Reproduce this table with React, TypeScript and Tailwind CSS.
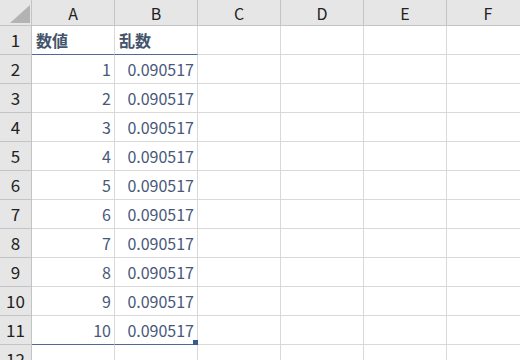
// Excel風のシート表示

const COLS = ["A", "B", "C", "D", "E", "F"];

const FONT = { fontFamily: "'Noto Sans CJK JP', 'Liberation Sans', sans-serif" };

function ColHeader({ label }: { label: string }) {
    return (
        <div className="h-[26px] w-[83px] shrink-0 flex items-center justify-center bg-[#e6e6e6] border-r border-b border-[#c4c4c4] text-[16px] text-[#222]">
            {label}
        </div>
    );
}

function RowHeader({ n }: { n: number }) {
    return (
        <div className="h-[29px] w-[32px] shrink-0 flex items-center justify-center bg-[#e6e6e6] border-r border-b border-[#c4c4c4] text-[17px] text-[#222]">
            {n}
        </div>
    );
}

export default function App() {
    const rows = Array.from({ length: 12 }, (_, i) => i + 1);

    return (
        <div className="w-[520px] h-[360px] overflow-hidden bg-white" style={FONT}>
            <div className="flex">
                {/* 左上の角 */}
                <div className="relative h-[26px] w-[32px] shrink-0 bg-[#e6e6e6] border-r border-b border-[#c4c4c4]">
                    <svg className="absolute left-[10px] top-[5px]" width="20" height="18" viewBox="0 0 20 18">
                        <polygon points="20,0 20,18 0,18" fill="#b3b3b3" />
                    </svg>
                </div>
                {COLS.map((c) => (
                    <ColHeader key={c} label={c} />
                ))}
            </div>

            {rows.map((r) => {
                const isHead = r === 1;
                const isData = r >= 2 && r <= 11;
                const blueBottom = r === 1 || r === 11;
                return (
                    <div key={r} className="flex">
                        <RowHeader n={r} />
                        {COLS.map((c, ci) => {
                            const inTable = ci < 2 && r <= 11;
                            return (
                                <div
                                    key={c}
                                    className={`relative h-[29px] w-[83px] shrink-0 border-r border-b flex items-center text-[16px] ${
                                        inTable && blueBottom ? "border-b-[#4e6a96]" : "border-b-[#d9d9d9]"
                                    } border-r-[#d9d9d9]`}
                                >
                                    {isHead && ci === 0 && (
                                        <span className="pl-[4px] font-bold text-[#44546a]">数値</span>
                                    )}
                                    {isHead && ci === 1 && (
                                        <span className="pl-[4px] font-bold text-[#44546a]">乱数</span>
                                    )}
                                    {isData && ci === 0 && (
                                        <span className="w-full text-right pr-[3px] text-[#48587a]">{r - 1}</span>
                                    )}
                                    {isData && ci === 1 && (
                                        <span className="w-full text-right pr-[3px] text-[#48587a]">0.090517</span>
                                    )}
                                    {r === 11 && ci === 1 && (
                                        <span className="absolute right-[-1px] bottom-[-1px] w-[5px] h-[5px] bg-[#3b5a8f]" />
                                    )}
                                </div>
                            );
                        })}
                    </div>
                );
            })}
        </div>
    );
}
